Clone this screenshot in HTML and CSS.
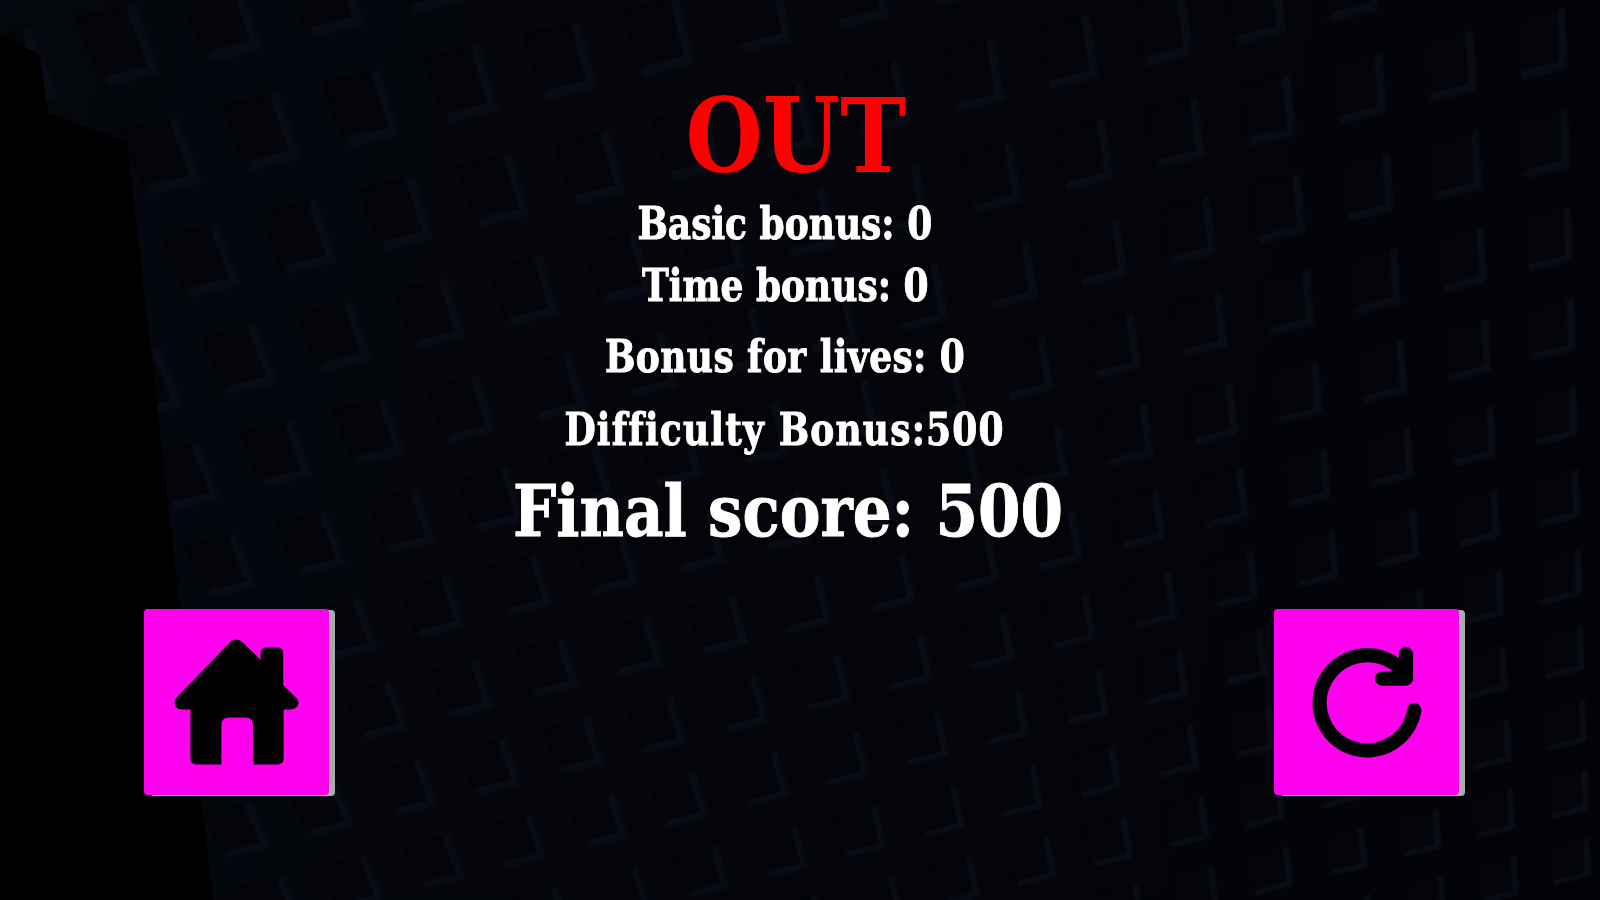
FILE: index.html
```html
<!DOCTYPE html>
<html lang="en">
<head>
<meta charset="utf-8">
<title>OUT</title>
<link rel="stylesheet" href="styles.css">
</head>
<body>
<main class="stage">
  <svg class="tiles" width="2800" height="2400" aria-hidden="true">
    <defs>
      <pattern id="tile" patternUnits="userSpaceOnUse" x="-50" y="-50" width="100" height="100">
        <rect x="24" y="22" width="52" height="56" rx="2" class="tile-fill"/>
        <path d="M24 74V22H72" class="tile-dark"/>
        <path d="M75 22V78H28" class="tile-light"/>
        <path d="M72 25V75H30" class="tile-light-inner"/>
      </pattern>
    </defs>
    <rect width="2800" height="2400" fill="url(#tile)"/>
  </svg>
  <svg class="void" width="1600" height="900" viewBox="0 0 1600 900" aria-hidden="true">
    <polygon points="0,35 40,55 48,113 127,142 213,900 0,900"/>
  </svg>
  <section class="results">
    <h1 class="title">OUT</h1>
    <p class="line line-basic">Basic bonus: 0</p>
    <p class="line line-time">Time bonus: 0</p>
    <p class="line line-lives">Bonus for lives: 0</p>
    <p class="line line-diff">Difficulty Bonus:500</p>
    <p class="final">Final score: 500</p>
  </section>
  <nav class="actions">
    <button class="action" aria-label="Home">
      <svg viewBox="72 56 553 559" class="icon"><path d="M330 155Q348 140 366 155L421 209V190Q421 172 440 172H470Q489 172 489 190V285L530 325Q540 340 530 350Q523 358 512 358H490V505Q490 523 470 523H398V405Q398 382 375 382H325Q303 382 303 405V523H228Q210 523 210 505V358H185Q172 358 165 348Q157 335 168 323Z"/></svg>
    </button>
    <button class="action" aria-label="Restart">
      <svg viewBox="72 56 553 559" class="icon"><path class="icon-line" d="M492 360A143 143 0 1 1 450 235M467 192V265H395"/></svg>
    </button>
  </nav>
</main>
</body>
</html>
```
FILE: styles.css
```css
* { box-sizing: border-box; }
html, body { margin: 0; height: 100%; background: #03050a; overflow: hidden; }
.stage {
  position: relative;
  width: 1600px;
  height: 900px;
  overflow: hidden;
  display: flex;
  flex-direction: column;
  align-items: center;
  font-family: "DejaVu Serif", serif;
  font-weight: 700;
  color: #fff;
  background: linear-gradient(100deg, #05070e 0%, #04060c 45%, #020308 100%);
}
.tiles {
  position: absolute;
  left: -600px;
  top: -600px;
  transform-origin: 600px 600px;
  transform: matrix3d(1.008, -.2373, 0, .0000182, .4598, 1.118, 0, .0002728, 0, 0, 1, 0, 160, 155, 0, 1);
  filter: blur(1.2px);
}
.tile-fill { fill: #03050a; }
.tile-dark { fill: none; stroke: #020307; stroke-width: 4; }
.tile-light { fill: none; stroke: #080b14; stroke-width: 7; stroke-linejoin: round; }
.tile-light-inner { fill: none; stroke: #0b0e1a; stroke-width: 2.5; stroke-linejoin: round; }
.void { position: absolute; inset: 0; fill: #000; }
.results {
  position: relative;
  height: 609px;
  width: 100%;
  padding-top: 74px;
  display: flex;
  flex-direction: column;
  align-items: center;
  filter: blur(.5px);
}
.title {
  margin: 0 0 0 -8px;
  font-size: 102px;
  line-height: 124px;
  color: #f00;
  font-weight: 700;
  transform: scaleX(.87);
}
.line, .final {
  margin: 0;
  text-shadow: 0 0 3px #000, 0 0 3px #000;
  white-space: nowrap;
  -webkit-text-stroke: .9px #fff;
}
.line { font-size: 40px; line-height: 50px; margin-left: -30px; transform: scale(.9, 1.1); }
.line-basic { margin-top: 1px; }
.line-time { margin-top: 12px; }
.line-lives { margin-top: 21px; letter-spacing: .45px; }
.line-diff { margin-top: 23px; letter-spacing: 1.3px; }
.final { font-size: 64px; line-height: 76px; margin: 19px 0 0 -24px; transform: scale(.955, 1.1); }
.actions {
  position: relative;
  width: 100%;
  padding: 0 141px 0 144px;
  display: flex;
  justify-content: space-between;
}
.action {
  width: 185px;
  height: 186px;
  padding: 0;
  border: 0;
  border-radius: 4px;
  background: #ff00ee;
  box-shadow: 6px 1px 0 #aaa;
}
.icon { display: block; width: 100%; height: 100%; fill: #000; }
.icon-line { fill: none; stroke: #000; stroke-width: 43; stroke-linecap: round; stroke-linejoin: round; }
```
